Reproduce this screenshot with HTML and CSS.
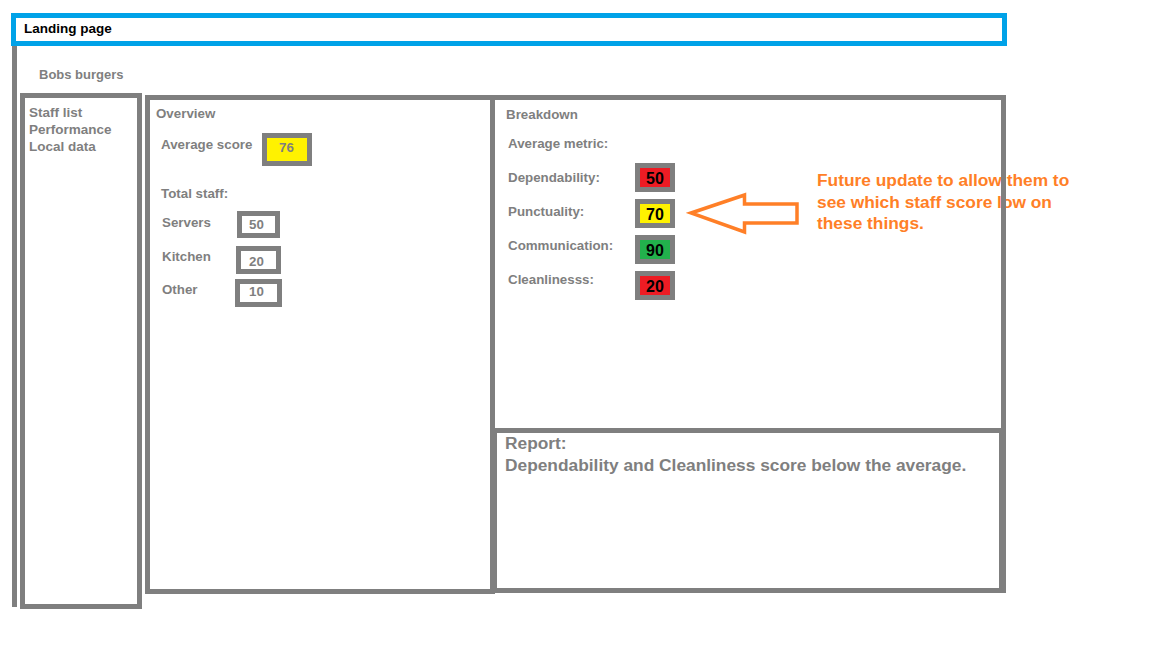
FILE: index.html
```html
<!DOCTYPE html>
<html lang="en">
<head>
<meta charset="utf-8">
<title>Landing page</title>
<link rel="stylesheet" href="styles.css">
</head>
<body>
<header class="topbar">Landing page</header>
<div class="frame">
  <div class="brand">Bobs burgers</div>
  <div class="main">
    <nav class="sidebar">
      <span class="nav-item">Staff list</span>
      <span class="nav-item">Performance</span>
      <span class="nav-item">Local data</span>
    </nav>
    <section class="overview">
      <div class="ov-title">Overview</div>
      <div class="ov-avg">
        <span class="ov-avg-label">Average score</span>
        <span class="score-box">76</span>
      </div>
      <div class="ov-total">Total staff:</div>
      <div class="staff-row staff-row--servers">
        <span class="staff-label">Servers</span>
        <span class="count">50</span>
      </div>
      <div class="staff-row staff-row--kitchen">
        <span class="staff-label">Kitchen</span>
        <span class="count">20</span>
      </div>
      <div class="staff-row staff-row--other">
        <span class="staff-label">Other</span>
        <span class="count">10</span>
      </div>
    </section>
    <div class="right-col">
      <section class="breakdown">
        <div class="bd-title">Breakdown</div>
        <div class="bd-avg">Average metric:</div>
        <div class="metrics">
          <div class="metric-labels">
            <span>Dependability:</span>
            <span>Punctuality:</span>
            <span>Communication:</span>
            <span>Cleanlinesss:</span>
          </div>
          <div class="metric-values">
            <span class="metric metric--red">50</span>
            <span class="metric metric--yellow">70</span>
            <span class="metric metric--green">90</span>
            <span class="metric metric--red">20</span>
          </div>
        </div>
      </section>
      <section class="report">
        <div class="report-text">Report:<br>Dependability and Cleanliness score below the average.</div>
      </section>
    </div>
  </div>
</div>
<svg class="arrow" width="118" height="50" viewBox="0 0 118 50" aria-hidden="true">
  <polygon points="5,23 58.5,5 58.5,14 111,14 111,33 58.5,33 58.5,42" fill="none" stroke="#ff7f27" stroke-width="3.5" stroke-linejoin="miter"/>
</svg>
<p class="note">Future update to allow them to<br>see which staff score low on<br>these things.</p>
</body>
</html>
```

FILE: styles.css
```css
html {
  background: #fff;
}

body {
  margin: 0;
  padding: 0;
  font-family: "Liberation Sans", Arial, sans-serif;
  font-weight: bold;
  color: #7f7f7f;
  font-size: 13.33px;
  line-height: 15px;
  min-height: 648px;
}

.topbar {
  box-sizing: border-box;
  display: block;
  margin: 13px 0 0 11px;
  width: 996px;
  height: 33px;
  border: 5px solid #00a2e8;
  padding: 0 0 2px 8px;
  font-size: 13.5px;
  line-height: 21px;
  color: #000;
}

.frame {
  box-sizing: border-box;
  margin-left: 12px;
  height: 561px;
  border-left: 5px solid #7f7f7f;
}

.brand {
  padding: 21px 0 0 22px;
  font-size: 13px;
  line-height: 15px;
}

.main {
  display: flex;
  align-items: flex-start;
  margin-top: 11px;
}

.sidebar {
  box-sizing: border-box;
  flex: none;
  width: 122px;
  height: 516px;
  margin-left: 3px;
  border: 5px solid #7f7f7f;
  padding: 6px 0 0 4px;
  display: flex;
  flex-direction: column;
  font-size: 13.5px;
  line-height: 17px;
}

.overview {
  box-sizing: border-box;
  flex: none;
  width: 350px;
  height: 499px;
  margin: 2px 0 0 3px;
  border: 5px solid #7f7f7f;
}

.ov-title {
  margin: 6px 0 0 6px;
}

.ov-avg {
  display: flex;
  margin: 12px 0 0 11px;
}

.ov-avg-label {
  width: 101px;
  margin-top: 4px;
}

.score-box {
  box-sizing: border-box;
  width: 50px;
  height: 33px;
  border: 5px solid #7f7f7f;
  background: #fff200;
  text-align: center;
  line-height: 20px;
  padding-right: 1px;
}

.ov-total {
  margin: 20px 0 0 11px;
}

.staff-row {
  display: flex;
  margin-left: 12px;
}

.staff-label {
  margin-top: 3px;
}

.count {
  box-sizing: border-box;
  border: 5px solid #7f7f7f;
  background: #fff;
  text-align: center;
  padding-right: 4px;
}

.staff-row--servers { margin-top: 10px; }
.staff-row--servers .staff-label { width: 75px; margin-top: 4px; }
.staff-row--servers .count { width: 43px; height: 27px; line-height: 17px; }

.staff-row--kitchen { margin-top: 8px; }
.staff-row--kitchen .staff-label { width: 74px; }
.staff-row--kitchen .count { width: 45px; height: 28px; padding-top: 3px; line-height: 15px; }

.staff-row--other { margin-top: 5px; }
.staff-row--other .staff-label { width: 73px; }
.staff-row--other .count { width: 47px; height: 28px; line-height: 16px; }

.right-col {
  flex: none;
  width: 516px;
  margin: 2px 0 0 -5px;
}

.breakdown {
  box-sizing: border-box;
  height: 338px;
  border: 5px solid #7f7f7f;
  padding-left: 3px;
}

.bd-title {
  margin: 7px 0 0 8px;
}

.bd-avg {
  margin: 14px 0 0 10px;
}

.metrics {
  display: flex;
  margin: 10px 0 0 10px;
}

.metric-labels {
  display: flex;
  flex-direction: column;
  width: 127px;
  line-height: 34px;
}

.metric-values {
  display: flex;
  flex-direction: column;
  gap: 7px;
  margin-top: 2px;
}

.metric {
  box-sizing: border-box;
  width: 40px;
  height: 29px;
  border: 5px solid #7f7f7f;
  color: #000;
  font-size: 16px;
  line-height: 18px;
  padding-top: 2px;
  text-align: center;
}

.metric--red { background: #ed1c24; }
.metric--yellow { background: #fff200; }
.metric--green { background: #22b14c; }

.report {
  box-sizing: border-box;
  height: 165px;
  margin: -5px 0 0 2px;
  border: 5px solid #7f7f7f;
  border-right-width: 7px;
  padding-left: 5px;
}

.report-text {
  margin: -1px 0 0 3px;
  font-size: 17.33px;
  line-height: 22px;
}

.arrow {
  position: absolute;
  left: 686px;
  top: 190px;
}

.note {
  position: absolute;
  left: 817px;
  top: 170px;
  margin: 0;
  z-index: -1;
  color: #ff7f27;
  font-size: 17.33px;
  line-height: 21.7px;
  white-space: nowrap;
}
```
